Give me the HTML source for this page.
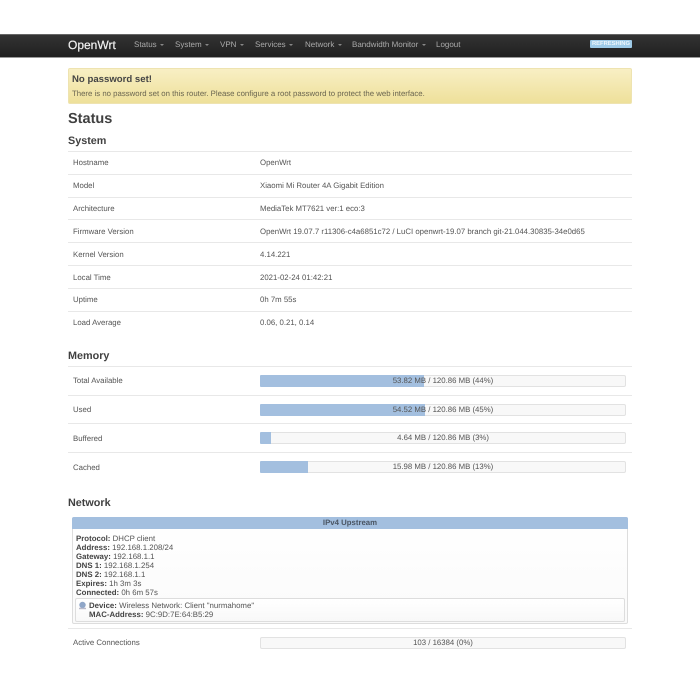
<!DOCTYPE html>
<html><head><meta charset="utf-8"><title>OpenWrt</title>
<style>
html,body{margin:0;padding:0;background:#fff;width:700px;height:700px;overflow:hidden}
body{position:relative;font-family:"Liberation Sans",sans-serif;font-size:7.8px;color:#555;text-rendering:geometricPrecision;filter:blur(.25px)}
.t{position:absolute;white-space:nowrap;line-height:12px}
.l{position:absolute;left:68px;width:564px;height:1px;background:#e8e8e8}
.nav{position:absolute;left:0;top:34px;width:700px;height:24px;background:linear-gradient(#333,#1f1f1f);border-top:1px solid #666;border-bottom:1px solid #999;box-sizing:border-box}
.m{position:absolute;top:39px;color:#aaa;font-size:8px;line-height:12px;white-space:nowrap}
.m i{display:inline-block;width:0;height:0;border:2.2px solid transparent;border-top:2.5px solid #888;border-bottom:0;margin-left:3.5px;vertical-align:1px}
h2,h3{position:absolute;margin:0;left:68px;color:#404040;font-weight:bold;white-space:nowrap}
h2{font-size:14.5px;line-height:18px;top:110px}
h3{font-size:10.8px;line-height:14px}
.bar{position:absolute;left:260px;width:366px;height:12px;box-sizing:border-box;border:1px solid #e2e2e2;border-radius:2px;background:#f8f8f8;text-align:center;line-height:10px;font-size:7.8px;color:#555}
.bar u{position:absolute;left:-1px;top:-1px;height:12px;background:#a3bfdf;border-radius:1px 0 0 1px}
.bar span{position:relative}
b{color:#444}
</style></head>
<body>
<div class="nav"></div>
<div class="t" style="left:68px;top:37px;font-size:12px;line-height:16px;color:#f0f0f0;-webkit-text-stroke:.2px #f0f0f0">OpenWrt</div>
<div class="m" style="left:134px">Status<i></i></div>
<div class="m" style="left:175px">System<i></i></div>
<div class="m" style="left:220px">VPN<i></i></div>
<div class="m" style="left:255px">Services<i></i></div>
<div class="m" style="left:305px">Network<i></i></div>
<div class="m" style="left:352px">Bandwidth Monitor<i></i></div>
<div class="m" style="left:436px">Logout</div>
<div class="t" style="left:590px;top:40px;width:42px;height:8px;background:#9fcbe8;border-radius:1px;color:#eef6fb;font-size:5.8px;font-weight:bold;line-height:8px;text-align:center;overflow:hidden">REFRESHING</div>

<div style="position:absolute;left:68px;top:68px;width:564px;height:36px;box-sizing:border-box;background:linear-gradient(#f8efc4,#eee09a);border:1px solid #eee3b0;border-radius:2px"></div>
<div class="t" style="left:72px;top:74px;font-size:9.6px;font-weight:bold;color:#444">No password set!</div>
<div class="t" style="left:72px;top:88px;color:#6b6650;font-size:7.8px">There is no password set on this router. Please configure a root password to protect the web interface.</div>

<h2>Status</h2>
<h3 style="top:134px">System</h3>
<div class="l" style="top:151px"></div>
<div class="t" style="left:73px;top:157px">Hostname</div><div class="t" style="left:260px;top:157px">OpenWrt</div>
<div class="l" style="top:174px"></div>
<div class="t" style="left:73px;top:180px">Model</div><div class="t" style="left:260px;top:180px">Xiaomi Mi Router 4A Gigabit Edition</div>
<div class="l" style="top:197px"></div>
<div class="t" style="left:73px;top:203px">Architecture</div><div class="t" style="left:260px;top:203px">MediaTek MT7621 ver:1 eco:3</div>
<div class="l" style="top:219px"></div>
<div class="t" style="left:73px;top:226px">Firmware Version</div><div class="t" style="left:260px;top:226px">OpenWrt 19.07.7 r11306-c4a6851c72 / LuCI openwrt-19.07 branch git-21.044.30835-34e0d65</div>
<div class="l" style="top:242px"></div>
<div class="t" style="left:73px;top:249px">Kernel Version</div><div class="t" style="left:260px;top:249px">4.14.221</div>
<div class="l" style="top:265px"></div>
<div class="t" style="left:73px;top:272px">Local Time</div><div class="t" style="left:260px;top:272px">2021-02-24 01:42:21</div>
<div class="l" style="top:288px"></div>
<div class="t" style="left:73px;top:294px">Uptime</div><div class="t" style="left:260px;top:294px">0h 7m 55s</div>
<div class="l" style="top:311px"></div>
<div class="t" style="left:73px;top:317px">Load Average</div><div class="t" style="left:260px;top:317px">0.06, 0.21, 0.14</div>

<h3 style="top:349px">Memory</h3>
<div class="l" style="top:366px"></div>
<div class="t" style="left:73px;top:375px">Total Available</div>
<div class="bar" style="top:375px"><u style="width:164px"></u><span>53.82 MB / 120.86 MB (44%)</span></div>
<div class="l" style="top:395px"></div>
<div class="t" style="left:73px;top:404px">Used</div>
<div class="bar" style="top:404px"><u style="width:165px"></u><span>54.52 MB / 120.86 MB (45%)</span></div>
<div class="l" style="top:423px"></div>
<div class="t" style="left:73px;top:433px">Buffered</div>
<div class="bar" style="top:432px"><u style="width:11px"></u><span>4.64 MB / 120.86 MB (3%)</span></div>
<div class="l" style="top:452px"></div>
<div class="t" style="left:73px;top:462px">Cached</div>
<div class="bar" style="top:461px"><u style="width:48px"></u><span>15.98 MB / 120.86 MB (13%)</span></div>

<h3 style="top:496px">Network</h3>
<div style="position:absolute;left:72px;top:517px;width:556px;height:107px;box-sizing:border-box;border:1px solid #ddd;border-radius:2px;background:linear-gradient(#fff,#fafafa)"></div>
<div class="t" style="left:72px;top:517px;width:556px;height:12px;background:#a3bfdf;border-radius:2px 2px 0 0;text-align:center;font-weight:bold;color:#4a5563;font-size:7.8px">IPv4 Upstream</div>
<div class="t" style="left:76px;top:534px;line-height:9px;font-size:7.85px;color:#555">
<b>Protocol:</b> DHCP client<br><b>Address:</b> 192.168.1.208/24<br><b>Gateway:</b> 192.168.1.1<br><b>DNS 1:</b> 192.168.1.254<br><b>DNS 2:</b> 192.168.1.1<br><b>Expires:</b> 1h 3m 3s<br><b>Connected:</b> 0h 6m 57s</div>
<div style="position:absolute;left:75px;top:598px;width:550px;height:24px;box-sizing:border-box;border:1px solid #ddd;border-radius:2px;background:linear-gradient(#fff,#f8f8f8)"></div>
<svg style="position:absolute;left:78px;top:601px" width="9" height="9" viewBox="0 0 9 9"><circle cx="4.5" cy="4" r="3.2" fill="#8fa6c8"/><path d="M1 7.5h7" stroke="#b9b9c9" stroke-width="1.4"/></svg>
<div class="t" style="left:89px;top:601px;line-height:9px;font-size:7.85px;color:#555"><b>Device:</b> Wireless Network: Client "nurmahome"<br><b>MAC-Address:</b> 9C:9D:7E:64:B5:29</div>
<div class="l" style="top:628px"></div>
<div class="t" style="left:73px;top:637px">Active Connections</div>
<div class="bar" style="top:637px"><span>103 / 16384 (0%)</span></div>
</body></html>
